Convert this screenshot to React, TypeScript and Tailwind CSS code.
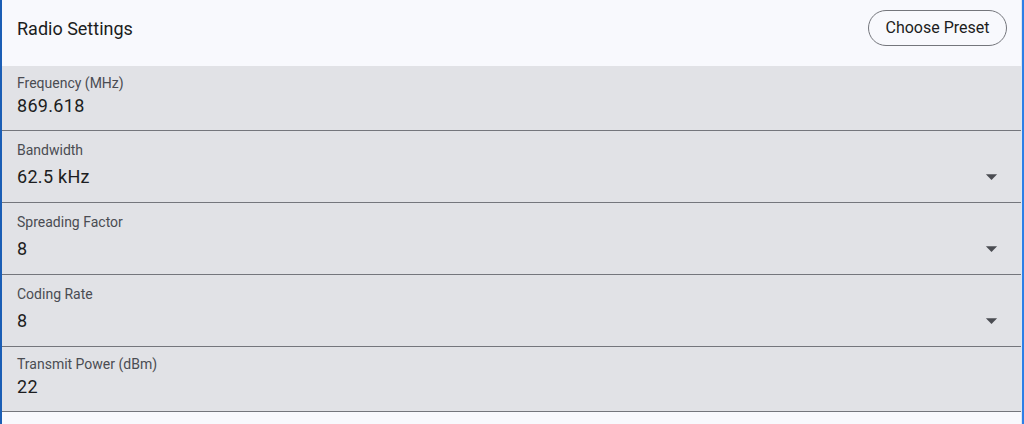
import React from "react";

const fields = [
  { label: "Frequency (MHz)", value: "869.618", select: false },
  { label: "Bandwidth", value: "62.5 kHz", select: true },
  { label: "Spreading Factor", value: "8", select: true },
  { label: "Coding Rate", value: "8", select: true },
  { label: "Transmit Power (dBm)", value: "22", select: false },
];

const DropArrow = () => (
  <svg width="27" height="27" viewBox="0 0 24 24" className="fill-[#4a4c52]">
    <path d="M7 10l5 5 5-5z" />
  </svg>
);

const Field = ({
  label,
  value,
  select,
}: {
  label: string;
  value: string;
  select: boolean;
}) => (
  <div
    className={`flex items-center bg-[#e1e2e6] border-b border-[#74767c] pl-[15px] pr-[16px] ${
      select ? "h-[72px]" : "h-[65px]"
    }`}
  >
    <div className="flex-1 flex flex-col mb-[4px]">
      <span className="text-[14px] leading-[18px] text-[#4a4c52]">{label}</span>
      <span
        className={`text-[18px] leading-[24px] text-[#1c1d21] tracking-[0.3px] ${
          select ? "mt-[6px]" : "mt-[2px]"
        }`}
      >
        {value}
      </span>
    </div>
    {select && (
      <div className="mt-[20px]">
        <DropArrow />
      </div>
    )}
  </div>
);

export default function App() {
  return (
    <div
      className="flex w-[1024px] h-[424px] bg-[#f8f9fd] overflow-hidden"
      style={{ fontFamily: "Roboto, 'Liberation Sans', sans-serif" }}
    >
      <div className="w-[2px] bg-[#1b5eb5]" />
      <div className="flex-1 flex flex-col">
        <div className="h-[66px] flex items-start justify-between pl-[15px] pr-[14px] pt-[10px]">
          <h1 className="h-[36px] flex items-center text-[18px] text-[#1c1d21]">Radio Settings</h1>
          <button className="h-[36px] w-[139px] rounded-full border border-[#74767c] text-[16px] text-[#1c1d21]">
            Choose Preset
          </button>
        </div>
        {fields.map((f) => (
          <Field key={f.label} {...f} />
        ))}
      </div>
      <div className="w-[1px] bg-[#dfe6f2]" />
      <div className="w-[2px] bg-[#2d7fe6]" />
    </div>
  );
}
